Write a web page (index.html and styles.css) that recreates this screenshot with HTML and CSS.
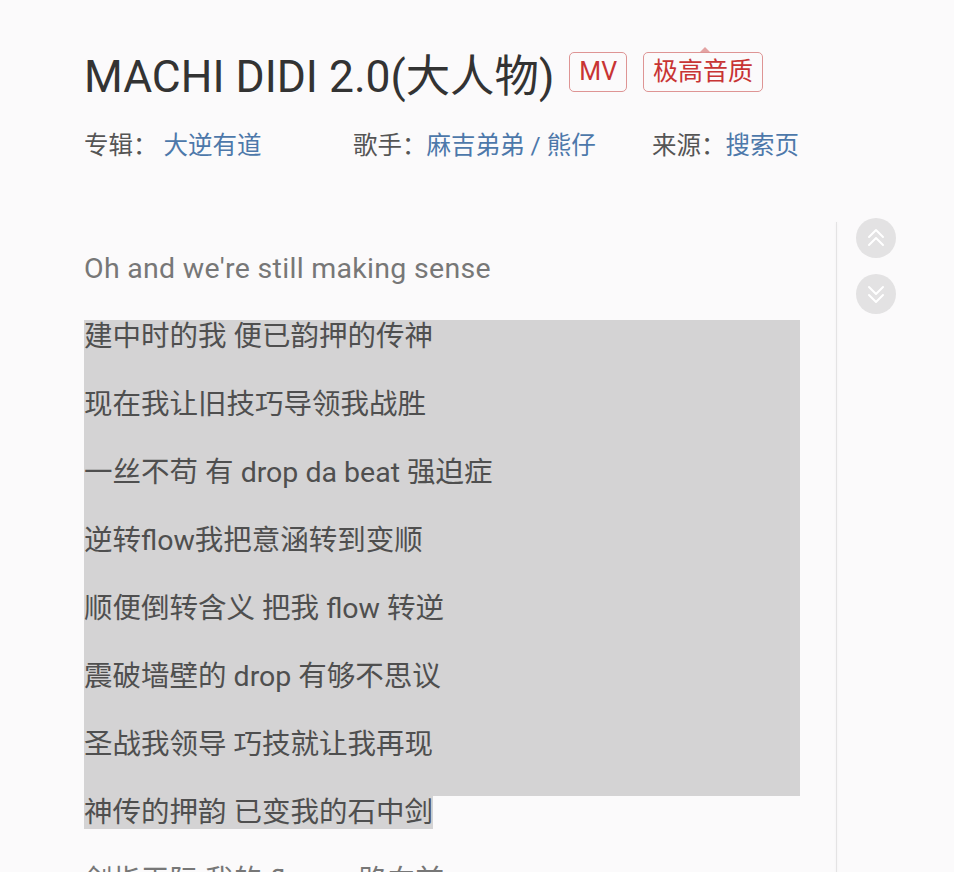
FILE: index.html
```html
<!DOCTYPE html>
<html lang="zh-CN">
<head>
    <meta charset="UTF-8">
    <meta name="viewport" content="width=device-width, initial-scale=1.0">
    <title>MACHI DIDI 2.0(大人物)</title>
    <link rel="stylesheet" href="styles.css">
</head>
<body>
    <div class="page">
        <div class="title-row">
            <h1>MACHI DIDI 2.0(大人物)</h1>
            <span class="tag">MV</span>
            <span class="tag tag-hq">极高音质</span>
        </div>

        <div class="meta">
            <div class="meta-item album"><span class="label">专辑：</span><a class="value">大逆有道</a></div>
            <div class="meta-item artist"><span class="label">歌手：</span><a class="value">麻吉弟弟 / 熊仔</a></div>
            <div class="meta-item"><span class="label">来源：</span><a class="value">搜索页</a></div>
        </div>

        <div class="main">
            <div class="lyrics">
                <p class="en">Oh and we're still making sense</p>
                <div class="selected">
                    <p>建中时的我 便已韵押的传神</p>
                    <p>现在我让旧技巧导领我战胜</p>
                    <p>一丝不苟 有 drop da beat 强迫症</p>
                    <p>逆转flow我把意涵转到变顺</p>
                    <p>顺便倒转含义 把我 flow 转逆</p>
                    <p>震破墙壁的 drop 有够不思议</p>
                    <p>圣战我领导 巧技就让我再现</p>
                </div>
                <p class="sel-end"><span>神传的押韵 已变我的石中剑</span></p>
                <p>剑指天际 我的 flow 一路向前</p>
            </div>

            <div class="divider"></div>

            <div class="controls">
                <button class="circle-btn" title="上一页">
                    <svg width="40" height="40" viewBox="0 0 40 40">
                        <polyline points="13,19 20,12 27,19" />
                        <polyline points="13,27 20,20 27,27" />
                    </svg>
                </button>
                <button class="circle-btn" title="下一页">
                    <svg width="40" height="40" viewBox="0 0 40 40">
                        <polyline points="13,13 20,20 27,13" />
                        <polyline points="13,21 20,28 27,21" />
                    </svg>
                </button>
            </div>
        </div>
    </div>
</body>
</html>
```

FILE: styles.css
```css
html, body {
    margin: 0;
    height: 872px;
    overflow: hidden;
}
body {
    background-color: #fbfafb;
    font-family: Roboto, "Noto Sans CJK SC", sans-serif;
    color: #555;
}
.page {
    padding: 46px 0 0 84px;
}
.title-row {
    display: flex;
    align-items: center;
    height: 52px;
}
h1 {
    margin: 0 15px 0 0;
    font-size: 44.4px;
    font-weight: 400;
    color: #333;
}
.tag {
    position: relative;
    box-sizing: border-box;
    height: 40px;
    line-height: 37px;
    padding: 0 9px;
    margin-right: 16px;
    border: 1.5px solid #de9494;
    border-radius: 5px;
    color: #c83434;
    font-size: 25px;
}
.tag-hq::before {
    content: "";
    position: absolute;
    top: -6px;
    left: 56px;
    border-left: 5px solid transparent;
    border-right: 5px solid transparent;
    border-bottom: 5px solid #e3a3a3;
}
.meta {
    display: flex;
    margin-top: 31px;
    font-size: 24.5px;
    line-height: 34px;
}
.meta-item .label {
    color: #555;
}
.meta-item .value {
    color: #4d78aa;
    cursor: pointer;
}
.album {
    width: 269px;
}
.album .value {
    margin-left: 6px;
}
.artist {
    width: 299px;
}
.main {
    display: flex;
    margin-top: 55px;
}
.lyrics {
    width: 716px;
    padding-top: 35px;
    font-size: 28.5px;
}
.lyrics p {
    margin: 0;
    line-height: 34px;
    padding-bottom: 34px;
    color: #777;
    white-space: nowrap;
}
.lyrics .en {
    letter-spacing: 0.3px;
    margin-top: -1px;
    padding-bottom: 34px;
}
.selected {
    background-color: #d4d3d4;
}
.selected p,
.sel-end {
    color: #4f4f4f !important;
}
.sel-end span {
    background-color: #d4d3d4;
}
.divider {
    width: 1px;
    margin: 4px 0 0 36px;
    height: 700px;
    background-color: #e4e3e4;
    box-shadow: 0 0 3px rgba(0, 0, 0, 0.06);
}
.controls {
    display: flex;
    flex-direction: column;
    gap: 16px;
    margin-left: 19px;
}
.circle-btn {
    width: 40px;
    height: 40px;
    padding: 0;
    border: none;
    border-radius: 50%;
    background-color: #e3e2e3;
    cursor: pointer;
}
.circle-btn svg {
    display: block;
}
.circle-btn polyline {
    fill: none;
    stroke: #fff;
    stroke-width: 2;
    stroke-linecap: round;
    stroke-linejoin: round;
}
```
